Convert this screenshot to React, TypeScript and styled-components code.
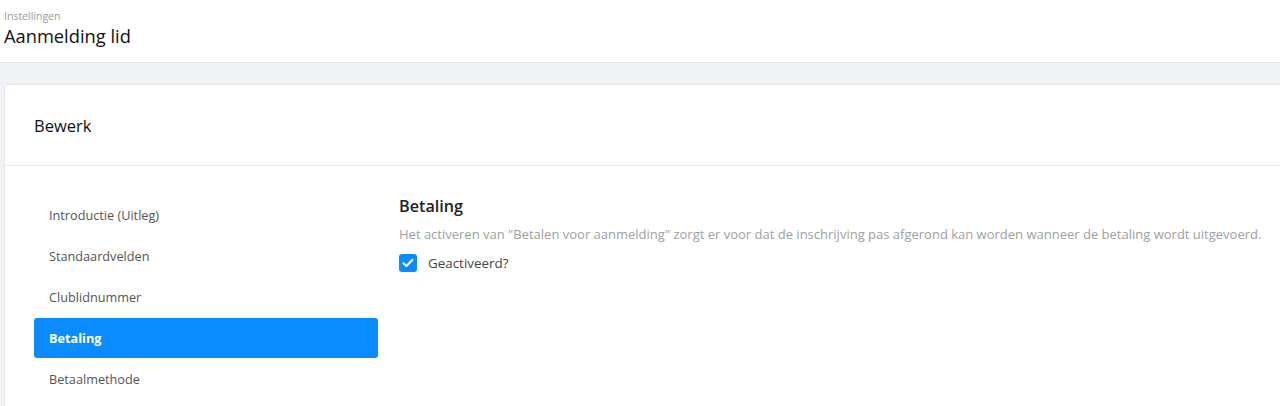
import React from "react";
import styled, { createGlobalStyle } from "styled-components";

const Global = createGlobalStyle`
  html, body { margin: 0; padding: 0; background: #ffffff; }
  body { font-family: "Open Sans", "Lato", sans-serif; overflow: hidden; }
  * { box-sizing: border-box; }
`;

const Page = styled.div`
  width: 1280px;
  height: 406px;
  overflow: hidden;
  background: #f1f2f5;
`;

const TopBar = styled.header`
  background: #ffffff;
  height: 63px;
  padding: 9px 4px 0;
  border-bottom: 1px solid #e6e7ea;
`;

const Crumb = styled.div`
  font-size: 10.5px;
  color: #9a9a9a;
  line-height: 14px;
`;

const Title = styled.h1`
  margin: 1px 0 0;
  font-size: 18.3px;
  font-weight: 400;
  color: #111;
  line-height: 24px;
`;

const Main = styled.main`
  padding: 21px 0 0 4px;
`;

const Card = styled.section`
  background: #ffffff;
  border: 1px solid #e4e5e9;
  border-right: none;
  border-radius: 3px 0 0 0;
  height: 400px;
`;

const CardHeader = styled.div`
  height: 81px;
  display: flex;
  align-items: center;
  padding-left: 29px;
  font-size: 16.5px;
  color: #111;
  border-bottom: 1px solid #e8e9ec;
`;

const CardBody = styled.div`
  display: flex;
  gap: 21px;
  padding: 29px 0 0 29px;
`;

const Sidebar = styled.nav`
  width: 344px;
  display: flex;
  flex-direction: column;
  gap: 1px;
`;

const NavItem = styled.div<{ $active?: boolean }>`
  height: 40px;
  display: flex;
  align-items: center;
  padding-left: 15px;
  font-size: 12.7px;
  border-radius: 3px;
  color: ${(p) => (p.$active ? "#ffffff" : "#555")};
  background: ${(p) => (p.$active ? "#0a8bff" : "transparent")};
  font-weight: ${(p) => (p.$active ? 700 : 400)};
`;

const Content = styled.div`
  padding-top: 0;
`;

const SectionTitle = styled.h2`
  margin: 0;
  font-size: 16.2px;
  font-weight: 600;
  color: #222;
  line-height: 22px;
`;

const Description = styled.p`
  margin: 9px 0 0;
  font-size: 13px;
  color: #a0a0a0;
  line-height: 16px;
`;

const CheckRow = styled.label`
  margin-top: 12px;
  display: flex;
  align-items: center;
  gap: 11px;
  font-size: 13.4px;
  color: #444;
`;

const Box = styled.span`
  width: 18px;
  height: 18px;
  border-radius: 3px;
  background: #0a8bff;
  display: flex;
  align-items: center;
  justify-content: center;
`;

export default function App() {
  const items = [
    "Introductie (Uitleg)",
    "Standaardvelden",
    "Clublidnummer",
    "Betaling",
    "Betaalmethode",
  ];
  return (
    <Page>
      <Global />
      <TopBar>
        <Crumb>Instellingen</Crumb>
        <Title>Aanmelding lid</Title>
      </TopBar>
      <Main>
        <Card>
          <CardHeader>Bewerk</CardHeader>
          <CardBody>
            <Sidebar>
              {items.map((it) => (
                <NavItem key={it} $active={it === "Betaling"}>
                  {it}
                </NavItem>
              ))}
            </Sidebar>
            <Content>
              <SectionTitle>Betaling</SectionTitle>
              <Description>
                Het activeren van "Betalen voor aanmelding" zorgt er voor dat de inschrijving pas afgerond kan worden wanneer de betaling wordt uitgevoerd.
              </Description>
              <CheckRow>
                <Box>
                  <svg width="12" height="10" viewBox="0 0 12 10">
                    <path d="M1.5 5.2 L4.5 8 L10.5 1.8" fill="none" stroke="#fff" strokeWidth="2" strokeLinecap="round" strokeLinejoin="round" />
                  </svg>
                </Box>
                Geactiveerd?
              </CheckRow>
            </Content>
          </CardBody>
        </Card>
      </Main>
    </Page>
  );
}
